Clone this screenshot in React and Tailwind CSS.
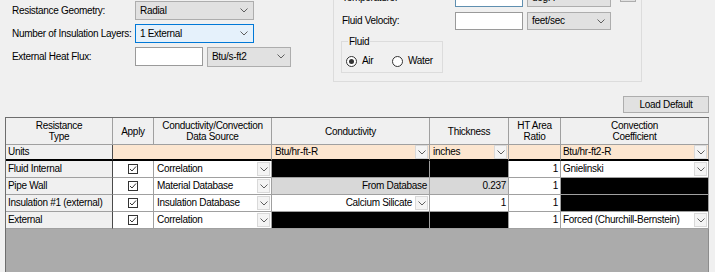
import React from 'react';

const Chevron = () => (
  <svg width="8" height="5" viewBox="0 0 8 5" className="block">
    <path d="M0.5 0.5 L4 4 L7.5 0.5" fill="none" stroke="#5f5f5f" strokeWidth="1" />
  </svg>
);

function Combo({ value, className = '', focused = false }) {
  return (
    <div
      className={[
        'flex items-center justify-between pl-[4px] pr-[5px] border',
        focused ? 'border-[#0078d7] bg-[#e5f1fb]' : 'border-[#adadad] bg-[#e1e1e1]',
        className,
      ].join(' ')}
    >
      <span>{value}</span>
      <Chevron />
    </div>
  );
}

const TextBox = ({ className = '' }) => (
  <div className={'bg-white border ' + className} />
);

const Radio = ({ checked }) => (
  <div className="w-[11px] h-[11px] rounded-full border border-[#333] bg-white flex items-center justify-center">
    {checked && <div className="w-[5px] h-[5px] rounded-full bg-[#333]" />}
  </div>
);

const CheckBox = () => (
  <div className="w-[10px] h-[10px] border border-[#333] bg-white flex items-center justify-center">
    <svg width="8" height="8" viewBox="0 0 8 8">
      <path d="M1 4 L3 6 L7 1.5" fill="none" stroke="#333" strokeWidth="1" />
    </svg>
  </div>
);

const CellArrow = () => (
  <div className="w-[13px] h-[14px] mr-[1px] border border-[#d9d9d9] bg-[#f4f4f4] flex items-center justify-center shrink-0">
    <Chevron />
  </div>
);

const rows = [
  {
    name: 'Fluid Internal',
    source: 'Correlation',
    cond: { kind: 'black' },
    thick: { kind: 'black' },
    conv: { kind: 'combo', text: 'Gnielinski' },
  },
  {
    name: 'Pipe Wall',
    source: 'Material Database',
    cond: { kind: 'gray', text: 'From Database' },
    thick: { kind: 'gray', text: '0.237' },
    conv: { kind: 'black' },
  },
  {
    name: 'Insulation #1 (external)',
    source: 'Insulation Database',
    cond: { kind: 'comboRight', text: 'Calcium Silicate' },
    thick: { kind: 'text', text: '1' },
    conv: { kind: 'black' },
  },
  {
    name: 'External',
    source: 'Correlation',
    cond: { kind: 'black' },
    thick: { kind: 'black' },
    conv: { kind: 'combo', text: 'Forced (Churchill-Bernstein)' },
  },
];

const cellBase = 'h-[17px] border-r border-b border-[#a0a0a0] flex items-center overflow-hidden whitespace-nowrap';

function DataCell({ cell }) {
  if (cell.kind === 'black') return <div className={cellBase + ' bg-black'} />;
  if (cell.kind === 'gray')
    return <div className={cellBase + ' bg-[#d8d8d8] justify-end pr-[2px]'}>{cell.text}</div>;
  if (cell.kind === 'text')
    return <div className={cellBase + ' bg-white justify-end pr-[2px]'}>{cell.text}</div>;
  if (cell.kind === 'comboRight')
    return (
      <div className={cellBase + ' bg-white justify-end'}>
        <span className="pr-[3px]">{cell.text}</span>
        <CellArrow />
      </div>
    );
  return (
    <div className={cellBase + ' bg-white'}>
      <span className="flex-1 pl-[2px]">{cell.text}</span>
      <CellArrow />
    </div>
  );
}

export default function App() {
  return (
    <div className="w-[715px] h-[272px] overflow-hidden bg-[#f0f0f0] text-black text-[10px] tracking-[-0.3px] leading-[12px] font-['Liberation_Sans',Arial,sans-serif]">
      {/* Top settings */}
      <div className="flex h-[82px]">
        <div className="w-[333px] pl-[12px] pt-[1px] flex flex-col gap-[4px]">
          <div className="flex items-center h-[19px]">
            <span className="w-[123px]">Resistance Geometry:</span>
            <Combo value="Radial" className="w-[119px] h-[19px]" />
          </div>
          <div className="flex items-center h-[19px]">
            <span className="w-[123px]">Number of Insulation Layers:</span>
            <Combo value="1 External" focused className="w-[119px] h-[19px]" />
          </div>
          <div className="flex items-center h-[19px]">
            <span className="w-[123px]">External Heat Flux:</span>
            <TextBox className="w-[68px] h-[19px] border-[#9a9a9a]" />
            <Combo value="Btu/s-ft2" className="ml-[4px] w-[84px] h-[20px]" />
          </div>
        </div>

        <div className="w-[309px] h-[112px] -mt-[30px] self-start border border-[#dcdcdc] pl-[8px] pt-[18px]">
          <div className="flex items-center h-[18px]">
            <span className="w-[113px]">Temperature:</span>
            <TextBox className="w-[68px] h-[18px] border-[#5f8fb0]" />
            <Combo value="deg. F" className="ml-[4px] w-[84px] h-[18px]" />
            <div className="ml-[9px] self-start w-[16px] h-[13px] border border-[#adadad] bg-[#e1e1e1]" />
          </div>
          <div className="flex items-center h-[18px] mt-[5px]">
            <span className="w-[113px]">Fluid Velocity:</span>
            <TextBox className="w-[68px] h-[18px] border-[#9a9a9a]" />
            <Combo value="feet/sec" className="ml-[4px] w-[84px] h-[18px]" />
          </div>
          <div className="relative -ml-[1px] mt-[11px] w-[102px] h-[32px] border border-[#dcdcdc] pl-[4px] pt-[13px]">
            <span className="absolute -top-[6px] left-[6px] px-[1px] bg-[#f0f0f0] leading-[11px]">Fluid</span>
            <div className="flex items-center">
              <div className="flex items-center w-[46px]">
                <Radio checked />
                <span className="ml-[5px]">Air</span>
              </div>
              <div className="flex items-center">
                <Radio />
                <span className="ml-[5px]">Water</span>
              </div>
            </div>
          </div>
        </div>
      </div>

      {/* Load default */}
      <div className="flex justify-end pr-[6px] mt-[14px]">
        <button className="w-[86px] h-[17px] border border-[#adadad] bg-[#e1e1e1] flex items-center justify-center">
          Load Default
        </button>
      </div>

      {/* Grid */}
      <div className="ml-[5px] mt-[4px] w-[704px] h-[155px] flex flex-col border-l border-t border-[#6d6d6d]">
        <div className="grid grid-cols-[107px_41px_118px_158px_79px_52px_148px]">
          {[
            ['Resistance', 'Type'],
            ['Apply'],
            ['Conductivity/Convection', 'Data Source'],
            ['Conductivity'],
            ['Thickness'],
            ['HT Area', 'Ratio'],
            ['Convection', 'Coefficient'],
          ].map((lines, i) => (
            <div
              key={i}
              className="h-[27px] border-r border-b border-[#a0a0a0] bg-[#f0f0f0] flex flex-col items-center justify-center text-center leading-[11px]"
            >
              {lines.map((l) => (
                <span key={l}>{l}</span>
              ))}
            </div>
          ))}

          {/* Units row */}
          <div className="h-[16px] border-r border-r-[#4a4a4a] border-b-2 border-b-black bg-[#f0f0f0] flex items-center pl-[2px]">
            Units
          </div>
          <div className="h-[16px] border-b-2 border-b-black bg-[#fce6d0]" />
          <div className="h-[16px] border-r border-r-[#a0a0a0] border-b-2 border-b-black bg-[#fce6d0]" />
          <div className="h-[16px] border-r border-r-[#a0a0a0] border-b-2 border-b-black bg-[#fce6d0] flex items-center">
            <span className="flex-1 pl-[3px]">Btu/hr-ft-R</span>
            <CellArrow />
          </div>
          <div className="h-[16px] border-r border-r-[#a0a0a0] border-b-2 border-b-black bg-[#fce6d0] flex items-center">
            <span className="flex-1 pl-[3px]">inches</span>
            <CellArrow />
          </div>
          <div className="h-[16px] border-r border-r-[#a0a0a0] border-b-2 border-b-black bg-[#fce6d0]" />
          <div className="h-[16px] border-r border-r-[#a0a0a0] border-b-2 border-b-black bg-[#fce6d0] flex items-center">
            <span className="flex-1 pl-[2px]">Btu/hr-ft2-R</span>
            <CellArrow />
          </div>

          {rows.map((r) => (
            <React.Fragment key={r.name}>
              <div className="h-[17px] border-r border-r-[#4a4a4a] border-b border-b-[#a0a0a0] bg-[#f0f0f0] flex items-center pl-[2px] whitespace-nowrap">
                {r.name}
              </div>
              <div className={cellBase + ' bg-white justify-center'}>
                <CheckBox />
              </div>
              <div className={cellBase + ' bg-white'}>
                <span className="flex-1 pl-[3px]">{r.source}</span>
                <CellArrow />
              </div>
              <DataCell cell={r.cond} />
              <DataCell cell={r.thick} />
              <div className={cellBase + ' bg-white justify-end pr-[2px]'}>1</div>
              <DataCell cell={r.conv} />
            </React.Fragment>
          ))}
        </div>
        <div className="flex-1 w-[703px] bg-[#ababab] border-r border-[#8c8c8c]" />
      </div>
    </div>
  );
}
